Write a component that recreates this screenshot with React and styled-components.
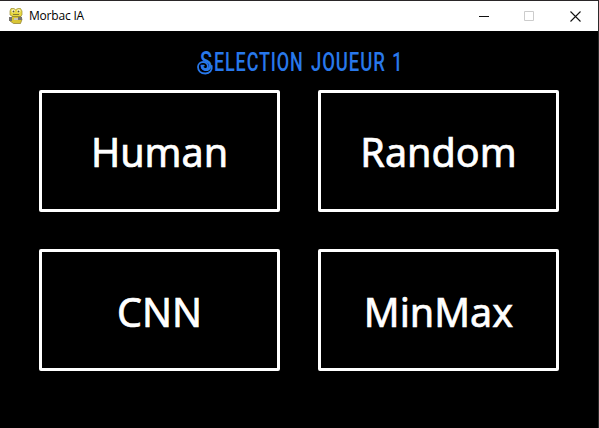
import React from "react";
import styled, { createGlobalStyle } from "styled-components";

const GlobalStyle = createGlobalStyle`
  * { box-sizing: border-box; }
  html, body { margin: 0; background: #000; overflow: hidden; }
`;

const Window = styled.div`
  width: 599px;
  height: 428px;
  display: flex;
  flex-direction: column;
  background: #000;
  border-top: 1px solid #2a2628;
  border-right: 1px solid #2b2b2b;
`;

const TitleBar = styled.header`
  height: 30px;
  flex: none;
  display: flex;
  align-items: center;
  background: #fff;
  padding-left: 8px;
`;

const AppName = styled.span`
  flex: 1;
  margin-left: 5px;
  font: 12px/16px "Open Sans", "Noto Sans", sans-serif;
  letter-spacing: -0.2px;
  color: #000;
`;

const WindowButton = styled.button`
  width: 45px;
  height: 30px;
  padding: 0;
  border: 0;
  background: transparent;
  display: flex;
  align-items: center;
  justify-content: center;
  color: ${(p) => (p.disabled ? "#ccc" : "#111")};
`;

const CaptionIcon = styled.svg`
  display: block;
  margin-right: ${(p) => p.$inset ?? 2}px;
`;

const Screen = styled.main`
  flex: 1;
  display: flex;
  flex-direction: column;
  align-items: center;
  padding-top: 16px;
`;

const Heading = styled.h1`
  margin: 0;
  height: 43px;
  width: 204px;
  display: flex;
  align-items: flex-start;
  color: #2878eb;
  font: 500 25px/31px Roboto, sans-serif;
  white-space: nowrap;
`;

const Initial = styled.span`
  position: relative;
  width: 16.5px;
  flex: none;
  padding-left: 3px;
  font-size: 27px;
  line-height: 31px;
`;

const InitialLetter = styled.span`
  display: inline-block;
  transform: scaleX(0.74);
  transform-origin: left;
`;

const Swirl = styled.svg`
  position: absolute;
  left: 0;
  top: 13px;
`;

const Word = styled.span`
  flex: none;
  width: ${(p) => p.$width}px;
  transform: scaleX(${(p) => p.$scale});
  transform-origin: left;
  letter-spacing: 1.2px;
`;

const Choices = styled.div`
  display: grid;
  grid-template-columns: 241px 241px;
  grid-auto-rows: 122px;
  gap: 37px 38px;
`;

const Choice = styled.button`
  padding: 2px 0 0;
  border: 3px solid #fff;
  border-radius: 2px;
  background: #000;
  color: #fff;
  font: 400 39.5px/54px "Noto Sans", "Open Sans", sans-serif;
  -webkit-text-stroke: 0.7px currentColor;

  &:nth-child(n + 3) {
    padding-top: 4px;
  }
`;

function SnakeIcon() {
  return (
    <svg width="16" height="18" viewBox="0 0 16 18">
      <path d="M3 1.5h3l1.5 1.2L10 1.5h2.5L14 4v4l-2 2H6L2 8V4z" fill="#e8d840" stroke="#9b8e32" strokeWidth=".7" />
      <path d="M4 9.5h9l1 3-1.5 4h-7L2 14z" fill="#d9c534" stroke="#8b7b28" strokeWidth=".7" />
      <circle cx="5.2" cy="4" r="1.7" fill="#f7f4ce" />
      <circle cx="10.8" cy="4" r="1.7" fill="#f7f4ce" />
      <path d="M5 4h1v1H5zM10 4h1v1h-1zM5 7.5h6" stroke="#6c6530" strokeWidth=".8" />
      <path d="M1 10h3v4H1zM10 10h4v3h-4z" fill="#77746e" />
      <path d="M6 11h4v2H6z" fill="#c9c5ba" />
    </svg>
  );
}

export default function App() {
  return (
    <Window>
      <GlobalStyle />
      <TitleBar>
        <SnakeIcon />
        <AppName>Morbac IA</AppName>
        <WindowButton aria-label="Minimize">
          <CaptionIcon width="11" height="11"><path d="M0 5.5h10" stroke="currentColor" /></CaptionIcon>
        </WindowButton>
        <WindowButton aria-label="Maximize" disabled>
          <CaptionIcon width="11" height="11"><path d="M.5.5h9v9h-9z" fill="none" stroke="currentColor" /></CaptionIcon>
        </WindowButton>
        <WindowButton aria-label="Close">
          <CaptionIcon $inset={1} width="11" height="11"><path d="M.5.5l10 10m0-10l-10 10" stroke="currentColor" strokeWidth="1.1" /></CaptionIcon>
        </WindowButton>
      </TitleBar>
      <Screen>
        <Heading>
          <Initial>
            <InitialLetter>S</InitialLetter>
            <Swirl width="17" height="15" viewBox="0 0 17 15" fill="none" stroke="currentColor" strokeWidth="1.8" strokeLinecap="round">
              <path d="M14.7 6C15.5 10.5 12.5 13.5 8.5 13.5C3.5 13.5 1 10.5 1 7C1 3.8 3.5 2 6 2C9 2 11.2 4.2 10.8 6.8C10.3 9.6 6.5 10 5.2 8.2C4.4 6.8 5.2 5.4 6.8 5.6" />
            </Swirl>
          </Initial>
          <Word $width={97.5} $scale={0.72}>ELECTION</Word>
          <Word $width={81} $scale={0.74}>JOUEUR</Word>
          <Word $width={10} $scale={0.74}>1</Word>
        </Heading>
        <Choices>
          {["Human", "Random", "CNN", "MinMax"].map((name) => (
            <Choice key={name}>{name}</Choice>
          ))}
        </Choices>
      </Screen>
    </Window>
  );
}
